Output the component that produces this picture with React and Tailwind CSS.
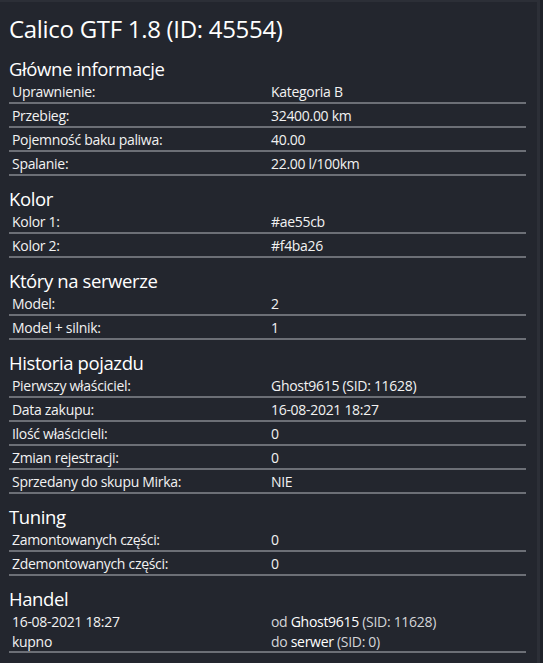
const sections = [
  {
    title: 'Główne informacje',
    rows: [
      ['Uprawnienie:', 'Kategoria B'],
      ['Przebieg:', '32400.00 km'],
      ['Pojemność baku paliwa:', '40.00'],
      ['Spalanie:', '22.00 l/100km'],
    ],
  },
  {
    title: 'Kolor',
    rows: [
      ['Kolor 1:', '#ae55cb'],
      ['Kolor 2:', '#f4ba26'],
    ],
  },
  {
    title: 'Który na serwerze',
    rows: [
      ['Model:', '2'],
      ['Model + silnik:', '1'],
    ],
  },
  {
    title: 'Historia pojazdu',
    rows: [
      ['Pierwszy właściciel:', 'Ghost9615 (SID: 11628)'],
      ['Data zakupu:', '16-08-2021 18:27'],
      ['Ilość właścicieli:', '0'],
      ['Zmian rejestracji:', '0'],
      ['Sprzedany do skupu Mirka:', 'NIE'],
    ],
  },
  {
    title: 'Tuning',
    rows: [
      ['Zamontowanych części:', '0'],
      ['Zdemontowanych części:', '0'],
    ],
  },
];

const Heading = ({ children }) => (
  <h2 className="mt-[11px] text-[18.5px] leading-[23px] tracking-[-0.4px] text-white">{children}</h2>
);

const Row = ({ label, value }) => (
  <div className="flex h-[24px] pl-[3px] pt-[2px] border-b-2 border-[#6c6f76] text-[14px] leading-[19px] tracking-[-0.3px] text-[#f2f2f2]">
    <span className="w-[259px] shrink-0">{label}</span>
    <span>{value}</span>
  </div>
);

export default function App() {
  return (
    <div
      className="min-h-[663px] w-full bg-[#1f2229] flex"
      style={{ fontFamily: '"Open Sans", "Noto Sans", sans-serif' }}
    >
      <div className="w-[540px] min-h-[663px] bg-[#23262e] border-t-2 border-r-[3px] border-[#2c2f37] pl-[9px] pr-[11px]">
        {/* Header */}
        <h1 className="pt-[10px] text-[24px] leading-[34px] tracking-[-0.3px] text-white">
          Calico GTF 1.8 (ID: 45554)
        </h1>

        {sections.map((section) => (
          <div key={section.title}>
            <Heading>{section.title}</Heading>
            {section.rows.map(([label, value]) => (
              <Row key={label} label={label} value={value} />
            ))}
          </div>
        ))}

        {/* Handel */}
        <Heading>Handel</Heading>
        <div className="flex pl-[3px] pt-[2px] border-b-2 border-[#6c6f76] text-[14px] leading-[19.5px] tracking-[-0.3px] text-[#f2f2f2]">
          <div className="w-[259px] shrink-0">
            <p>16-08-2021 18:27</p>
            <p>kupno</p>
          </div>
          <div className="text-[#d4d5d8]">
            <p>
              od <span className="text-white">Ghost9615</span> (SID: 11628)
            </p>
            <p>
              do <span className="text-white">serwer</span> (SID: 0)
            </p>
          </div>
        </div>
      </div>
    </div>
  );
}
